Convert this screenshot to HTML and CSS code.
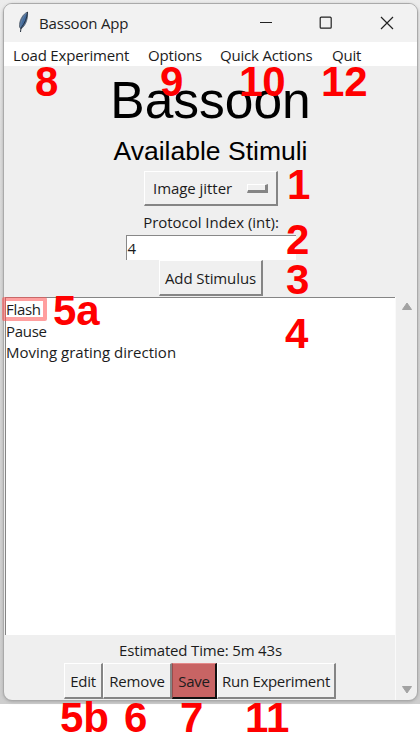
FILE: index.html
```html
<!DOCTYPE html>
<html lang="en">
<head>
<meta charset="utf-8">
<title>Bassoon App</title>
<link rel="stylesheet" href="styles.css">
</head>
<body>
<div class="desktop">
  <div class="window">
    <header class="titlebar">
      <svg class="feather" width="14" height="22" viewBox="0 0 14 22"><path d="M10.5 1C6 3 2 9 2.5 16L4 18C9 14 11 8 10.5 1Z" fill="#426b9d" stroke="#59616b" stroke-width=".8"/><path d="M10.5 1C10 7 8 12 4 17L3.5 21" fill="none" stroke="#26313e" stroke-width="1"/><path d="M9.5 2C6 6 4 10 3.5 16" fill="none" stroke="#7189a5" stroke-width=".7"/></svg>
      <span class="app-name">Bassoon App</span>
      <svg class="controls" width="136" height="16" viewBox="0 0 136 16" fill="none" stroke="#222" stroke-width="1.2"><path d="M1 7.5H13"/><rect x="61.2" y="2.2" width="11" height="11" rx="1"/><path d="M122 2L134 14M134 2L122 14"/></svg>
    </header>
    <nav class="menu"><span class="m-load">Load Experiment</span><span class="m-options">Options</span><span class="m-quick">Quick Actions</span><span class="m-quit">Quit</span></nav>
    <main>
      <h1>Bassoon</h1>
      <h2>Available Stimuli</h2>
      <div class="select raised"><span>Image jitter</span><i class="handle"></i></div>
      <div class="label"><span>Protocol Index (int):</span></div>
      <div class="entry">4</div>
      <div class="add raised"><span>Add Stimulus</span></div>
    </main>
    <section class="lower">
      <div class="left">
        <div class="list"><div class="flash">Flash</div><div class="pause">Pause</div><div class="moving">Moving grating direction</div></div>
        <div class="estimate"><span>Estimated Time: 5m 43s</span></div>
        <div class="buttons"><div class="raised b-edit"><span>Edit</span></div><div class="raised b-remove"><span>Remove</span></div><div class="raised b-save"><span>Save</span></div><div class="raised b-run"><span>Run Experiment</span></div></div>
      </div>
      <div class="scroll"><svg width="12" height="9" viewBox="0 0 12 9"><path d="M6 1L10.5 7.5H1.5Z" fill="#a2a2a2" stroke="#a2a2a2" stroke-linejoin="round"/></svg><svg width="12" height="9" viewBox="0 0 12 9"><path d="M6 8L10.5 1.5H1.5Z" fill="#a2a2a2" stroke="#a2a2a2" stroke-linejoin="round"/></svg></div>
    </section>
  </div>
</div>
<div class="highlight"></div>
<b class="note n8">8</b><b class="note n9">9</b><b class="note n10">10</b><b class="note n12">12</b>
<b class="note n1">1</b><b class="note n2">2</b><b class="note n3">3</b><b class="note n4">4</b><b class="note n5a">5a</b>
<b class="note n5b">5b</b><b class="note n6">6</b><b class="note n7">7</b><b class="note n11">11</b>
</body>
</html>
```
FILE: styles.css
```css
* { box-sizing: border-box; }
body { margin: 0; width: 420px; height: 732px; overflow: hidden; position: relative; background: #fff; color: #1c1c1c; font: 15px/20px "Open Sans", sans-serif; letter-spacing: -.3px; white-space: nowrap; }
.desktop { height: 704px; padding: 3px 2px 3px 3px; background: linear-gradient(#ececec, #dcdcdc 20%, #cecece); }
.window { width: 415px; height: 698px; border: 1px solid #aaa; border-radius: 9px; overflow: hidden; background: #efefef; box-shadow: 0 1px 3px #aaa; display: flex; flex-direction: column; }
.titlebar { height: 38px; flex: none; display: flex; align-items: center; padding-left: 13px; background: #f2f2f2; }
.feather { margin-top: -2px; }
.app-name { margin-left: 8px; width: 96px; color: #222; letter-spacing: -.18px; }
.controls { margin-left: 124px; }
.menu { height: 24px; flex: none; background: #fff; display: flex; line-height: 27px; padding-left: 9px; letter-spacing: -.18px; }
.m-load { width: 135px; }
.m-options { width: 72px; }
.m-quick { width: 112px; }
main { height: 231px; flex: none; display: flex; flex-direction: column; align-items: center; }
h1, h2 { margin: 0; font-family: "Liberation Sans", sans-serif; font-weight: 400; letter-spacing: 0; color: #000; }
h1 { font-size: 51.5px; line-height: 68px; height: 70px; }
h2 { font-size: 26.5px; line-height: 31px; height: 35px; }
.raised { border: 1px solid; border-width: 1px 2px 2px 1px; border-color: #fff #858585 #858585 #fff; background: #f0f0f0; display: flex; align-items: center; justify-content: center; flex: none; }
.select { width: 134px; height: 35px; justify-content: flex-start; padding-left: 8px; position: relative; left: .5px; letter-spacing: -.05px; }
.select span { width: 94px; }
.handle { width: 21px; height: 9px; background: #f0f0f0; border: 1px solid; border-width: 1px 3px 3px 1px; border-color: #fff #858585 #858585 #fff; }
.label { height: 29px; line-height: 33px; padding-left: 1px; letter-spacing: -.03px; }
.entry { width: 170px; height: 25px; flex: none; background: #fff; border-top: 1px solid #888; border-left: 1px solid #888; padding-left: 1px; line-height: 25px; }
.add { width: 104px; height: 36px; padding-left: 1px; letter-spacing: -.1px; }
.lower { height: 403px; flex: none; display: flex; }
.left { width: 391px; }
.list { margin-left: 1px; height: 338px; background: #fff; border-top: 1px solid #858585; border-left: 1px solid #858585; line-height: 21.7px; padding-top: 1px; letter-spacing: 0; }
.flash, .pause { letter-spacing: -.3px; }
.estimate { height: 28px; line-height: 31px; padding-left: 2px; text-align: center; letter-spacing: -.17px; }
.buttons { display: flex; margin-left: 60px; height: 36px; }
.b-edit { width: 39px; }
.b-remove { width: 69px; letter-spacing: -.15px; }
.b-save { width: 45px; background: #c86464; border-color: #e58a8a #111 #111 #9a4b4b; }
.b-run { width: 119px; }
.scroll { width: 22px; border-left: 1px solid #fafafa; display: flex; flex-direction: column; align-items: center; justify-content: space-between; padding: 5px 0 6px; }
.highlight { position: absolute; left: 2px; top: 297px; width: 45px; height: 24px; border: 4px solid rgba(255, 80, 80, .55); border-radius: 2px; }
.note { position: absolute; color: #f00; font: bold 42px/42px "Liberation Sans", sans-serif; letter-spacing: 0; }
.n8 { left: 35px; top: 61px; }
.n9 { left: 160px; top: 61px; }
.n10 { left: 239px; top: 61px; }
.n12 { left: 321px; top: 61px; }
.n1 { left: 287px; top: 164px; }
.n2 { left: 286px; top: 219px; }
.n3 { left: 286px; top: 259px; }
.n4 { left: 285px; top: 313px; }
.n5a { left: 53px; top: 290px; }
.n5b { left: 60px; top: 697px; }
.n6 { left: 124px; top: 697px; }
.n7 { left: 180px; top: 697px; }
.n11 { left: 245px; top: 697px; }
```
